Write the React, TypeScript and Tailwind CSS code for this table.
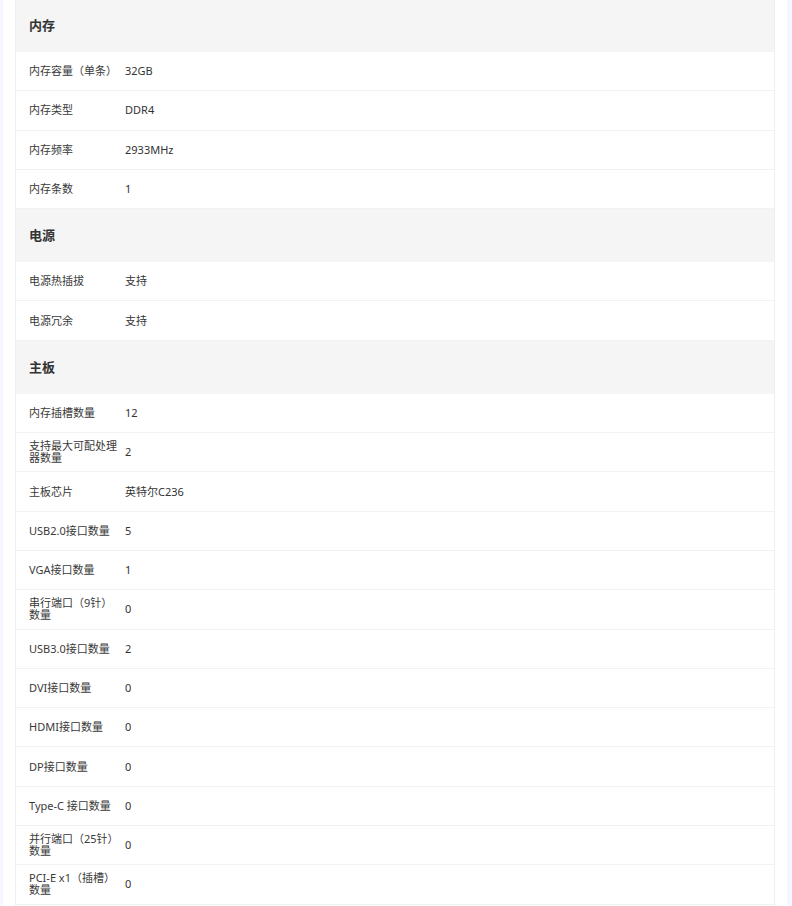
type Row = { label: string; value: string };
type Section = { title: string; rows: Row[] };

const sections: Section[] = [
  {
    title: "内存",
    rows: [
      { label: "内存容量（单条）", value: "32GB" },
      { label: "内存类型", value: "DDR4" },
      { label: "内存频率", value: "2933MHz" },
      { label: "内存条数", value: "1" },
    ],
  },
  {
    title: "电源",
    rows: [
      { label: "电源热插拔", value: "支持" },
      { label: "电源冗余", value: "支持" },
    ],
  },
  {
    title: "主板",
    rows: [
      { label: "内存插槽数量", value: "12" },
      { label: "支持最大可配处理器数量", value: "2" },
      { label: "主板芯片", value: "英特尔C236" },
      { label: "USB2.0接口数量", value: "5" },
      { label: "VGA接口数量", value: "1" },
      { label: "串行端口（9针）数量", value: "0" },
      { label: "USB3.0接口数量", value: "2" },
      { label: "DVI接口数量", value: "0" },
      { label: "HDMI接口数量", value: "0" },
      { label: "DP接口数量", value: "0" },
      { label: "Type-C 接口数量", value: "0" },
      { label: "并行端口（25针）数量", value: "0" },
      { label: "PCI-E x1（插槽）数量", value: "0" },
    ],
  },
];

export default function App() {
  return (
    <div
      className="min-h-[906px] bg-[#f4f8fe] pl-[3px] pr-[5px]"
      style={{ fontFamily: '"Noto Sans", "Noto Sans CJK SC", sans-serif' }}
    >
      <div className="min-h-[906px] bg-white px-3">
        {/* Spec table */}
        <div className="-mt-px border-x border-[#eeeeee] text-[#333333]">
          {sections.map((s) => (
            <div key={s.title}>
              <div className="flex h-[53px] items-center bg-[#f5f5f5] pl-[13px] text-[13px] font-bold">
                {s.title}
              </div>
              {s.rows.map((r) => (
                <div
                  key={r.label}
                  className="flex h-[39.3px] items-center border-b border-[#f2f2f2] text-[11px] leading-[12px]"
                >
                  <div className="w-[109px] shrink-0 pl-[13px] pr-[4px] text-[#3a3a3a]">
                    {r.label}
                  </div>
                  <div>{r.value}</div>
                </div>
              ))}
            </div>
          ))}
        </div>
      </div>
    </div>
  );
}
